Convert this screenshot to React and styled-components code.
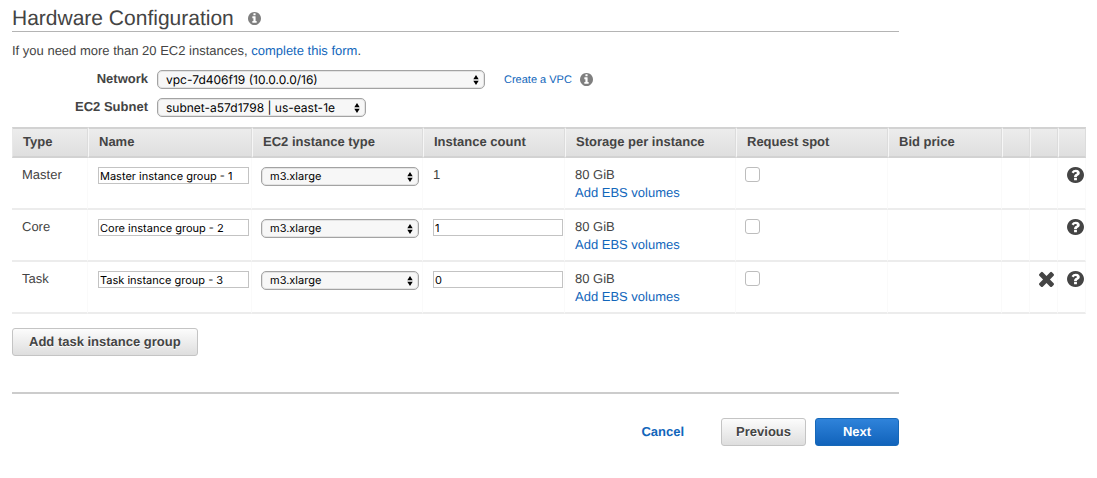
import React from "react";
import styled, { createGlobalStyle, css } from "styled-components";

const GlobalStyle = createGlobalStyle`
  *, *::before, *::after { box-sizing: border-box; }
  body {
    margin: 0;
    background: #fff;
    color: #444;
    font: 13px/18px "Liberation Sans", Arial, sans-serif;
    text-rendering: geometricPrecision;
  }
  button, input, select { text-rendering: inherit; }
`;

const Page = styled.main`
  padding: 6px 11px 0 12px;
`;

const Heading = styled.header`
  display: flex;
  align-items: center;
  gap: 14px;
  max-width: 887px;
  height: 26px;
  border-bottom: 1px solid #b4b4b4;
`;

const Title = styled.h1`
  margin: 0;
  font-size: 21px;
  line-height: 24px;
  font-weight: 400;
`;

const Note = styled.p`
  margin: 10px 0;
`;

const Link = styled.a`
  color: #1166bb;
  text-decoration: none;
  font-size: ${(p) => (p.$small ? "11px" : "inherit")};
  font-weight: ${(p) => (p.$bold ? 700 : 400)};
`;

const IconButton = styled.button`
  display: flex;
  padding: 0;
  border: 0;
  background: none;
  color: ${(p) => (p.$muted ? "#7f7f7f" : "#444")};
  cursor: pointer;
`;

const Fields = styled.div`
  display: grid;
  gap: 9px;
  margin-bottom: 10px;
`;

const Field = styled.div`
  display: flex;
  align-items: center;
  gap: 9px;
  height: 19px;
`;

const Label = styled.label`
  width: 136px;
  padding-bottom: 2px;
  text-align: right;
  font-size: 13px;
  font-weight: 700;
`;

const SelectBox = styled.span`
  display: grid;
  align-items: center;
  width: ${(p) => p.$width};
`;

const Select = styled.select`
  grid-area: 1 / 1;
  appearance: none;
  width: 100%;
  height: 19px;
  padding: 0 20px 0 8px;
  border: 1px solid #a3a3a3;
  border-radius: 5px;
  background: #f7f7f7;
  box-shadow: inset 0 0 0 1px #e3e3e3;
  color: #000;
  font: ${(p) => p.$size}/17px Inter, sans-serif;
`;

const Arrows = styled.svg`
  grid-area: 1 / 1;
  justify-self: end;
  margin-right: 6px;
  pointer-events: none;
`;

const Aside = styled.span`
  display: flex;
  align-items: center;
  gap: 8px;
  margin-left: 10px;
`;

const Table = styled.table`
  width: 100%;
  margin-bottom: 14px;
  border-collapse: separate;
  border-spacing: 0;
  table-layout: fixed;
`;

const Th = styled.th`
  height: 31px;
  padding: 0 0 2px 10px;
  border-top: 2px solid #d2d2d2;
  border-bottom: 2px solid #d2d2d2;
  border-left: 1px solid ${(p) => (p.$first ? "#e8e8e8" : "#f6f6f6")};
  border-right: 1px solid #dcdcdc;
  background: linear-gradient(#ececec, #dfdfdf);
  text-align: left;
  font-size: 13px;
  font-weight: 700;
  white-space: nowrap;
`;

const Td = styled.td`
  height: 52px;
  padding: ${(p) => (p.$control ? "9px 0 0 9px" : "8px 0 0 10px")};
  border-bottom: 2px solid #ececec;
  border-right: 1px solid #fafafa;
  vertical-align: top;
`;

const Input = styled.input`
  display: block;
  width: ${(p) => p.$width};
  height: 17px;
  margin: 0 1px;
  padding: 0 1px;
  border: 1px solid #c3c3c3;
  border-radius: 0;
  background: #fff;
  color: #000;
  font: 11px/15px Inter, sans-serif;
`;

const Check = styled.input`
  appearance: none;
  display: block;
  width: 15px;
  height: 15px;
  margin: 0;
  border: 1px solid #bdbdbd;
  border-radius: 3px;
  background: #fff;
  &:checked { background: #1166bb; }
`;

const variants = {
  plain: css`
    border-color: #c4c4c4;
    background: linear-gradient(#fcfcfc, #dedede);
    color: #444;
    text-shadow: 0 1px 0 #fff;
  `,
  primary: css`
    border-color: #1668b8;
    background: linear-gradient(#2f83da, #1163bb);
    color: #fff;
  `,
};

const Button = styled.button`
  height: 28px;
  min-width: 84px;
  padding: 0 ${(p) => (p.$wide ? "16px" : "14px")};
  border: 1px solid;
  border-radius: 3px;
  font: 700 13px/18px "Liberation Sans", Arial, sans-serif;
  cursor: pointer;
  ${(p) => variants[p.$variant || "plain"]}
`;

const Footer = styled.footer`
  display: flex;
  justify-content: flex-end;
  align-items: center;
  gap: 9px;
  max-width: 887px;
  margin-top: 36px;
  padding-top: 24px;
  border-top: 2px solid #ccc;
`;

const CancelSlot = styled.span`
  margin-right: 28px;
`;

const DISC =
  "M1664 896q0 209-103 385.5t-279.5 279.5-385.5 103-385.5-103-279.5-279.5-103-385.5 103-385.5 279.5-279.5 385.5-103 385.5 103 279.5 279.5 103 385.5z";
const ICONS = {
  info:
    "M1152 1376v-160q0-14-9-23t-23-9h-96v-512q0-14-9-23t-23-9h-320q-14 0-23 9t-9 23v160q0 14 9 23t23 9h96v320h-96q-14 0-23 9t-9 23v160q0 14 9 23t23 9h448q14 0 23-9t9-23zM1024 480v-160q0-14-9-23t-23-9h-192q-14 0-23 9t-9 23v160q0 14 9 23t23 9h192q14 0 23-9t9-23z" +
    DISC,
  help:
    "M1024 1376v-192q0-14-9-23t-23-9h-192q-14 0-23 9t-9 23v192q0 14 9 23t23 9h192q14 0 23-9t9-23zM1280 704q0-88-55.5-163t-138.5-116-170-41q-243 0-371 213-15 24 8 42l132 100q7 6 19 6 16 0 25-12 53-68 86-92 34-24 86-24 48 0 85.5 26t37.5 59q0 38-20 61t-68 45q-63 28-115.5 86.5t-52.5 125.5v36q0 14 9 23t23 9h192q14 0 23-9t9-23q0-19 21.5-49.5t54.5-49.5q32-18 49-28.5t46-35 44.5-48 28-60.5 12.5-81z" +
    DISC,
  remove:
    "M1490 1322q0 40-28 68l-136 136q-28 28-68 28t-68-28l-294-294-294 294q-28 28-68 28t-68-28l-136-136q-28-28-28-68t28-68l294-294-294-294q-28-28-28-68t28-68l136-136q28-28 68-28t68 28l294 294 294-294q28-28 68-28t68 28l136 136q28 28 28 68t-28 68l-294 294 294 294q28 28 28 68z",
};

function Icon({ name, width, height, viewBox = "128 128 1536 1536" }) {
  return (
    <svg width={width} height={height} viewBox={viewBox} preserveAspectRatio="none" aria-hidden="true">
      <path d={ICONS[name]} fill="currentColor" fillRule="evenodd" />
    </svg>
  );
}

function PopUp({ id, width, value, label, size = "11px" }) {
  return (
    <SelectBox $width={width}>
      <Select id={id} aria-label={label} defaultValue={value} $size={size}>
        <option>{value}</option>
      </Select>
      <Arrows width="6" height="10" viewBox="0 0 6 10" aria-hidden="true">
        <path d="M3 0L5.7 4.2H.3zM3 10L.3 5.8H5.7z" fill="#000" />
      </Arrows>
    </SelectBox>
  );
}

const COLUMNS = [
  ["Type", 76],
  ["Name", 164],
  ["EC2 instance type", 171],
  ["Instance count", 142],
  ["Storage per instance", 171],
  ["Request spot", 152],
  ["Bid price", 114],
  ["", 28],
  ["", 28],
  ["", 28],
];

const GROUPS = [
  { type: "Master", name: "Master instance group - 1", count: "1", fixed: true },
  { type: "Core", name: "Core instance group - 2", count: "1" },
  { type: "Task", name: "Task instance group - 3", count: "0", removable: true },
];

function GroupRow({ group }) {
  return (
    <tr>
      <Td>{group.type}</Td>
      <Td $control>
        <Input $width="151px" aria-label={`${group.type} name`} defaultValue={group.name} />
      </Td>
      <Td $control>
        <PopUp width="158px" value="m3.xlarge" label={`${group.type} instance type`} />
      </Td>
      {group.fixed ? (
        <Td>{group.count}</Td>
      ) : (
        <Td $control>
          <Input $width="130px" aria-label={`${group.type} instance count`} defaultValue={group.count} />
        </Td>
      )}
      <Td>
        80 GiB
        <br />
        <Link href="#ebs">Add EBS volumes</Link>
      </Td>
      <Td $control>
        <Check type="checkbox" aria-label={`Request spot for ${group.type}`} />
      </Td>
      <Td />
      <Td />
      <Td $control>
        {group.removable && (
          <IconButton aria-label="Remove group">
            <Icon name="remove" width="15" height="16" viewBox="302 302 1188 1252" />
          </IconButton>
        )}
      </Td>
      <Td $control>
        <IconButton aria-label={`Help for ${group.type}`}>
          <Icon name="help" width="17" height="16" />
        </IconButton>
      </Td>
    </tr>
  );
}

export default function App() {
  return (
    <Page>
      <GlobalStyle />
      <Heading>
        <Title>Hardware Configuration</Title>
        <IconButton $muted aria-label="About hardware configuration">
          <Icon name="info" width="13" height="13" />
        </IconButton>
      </Heading>
      <Note>
        If you need more than 20 EC2 instances, <Link href="#form">complete this form</Link>.
      </Note>
      <Fields>
        <Field>
          <Label htmlFor="network">Network</Label>
          <PopUp id="network" width="328px" size="12px" value="vpc-7d406f19 (10.0.0.0/16)" />
          <Aside>
            <Link $small href="#vpc">Create a VPC</Link>
            <IconButton $muted aria-label="About networks">
              <Icon name="info" width="13" height="13" />
            </IconButton>
          </Aside>
        </Field>
        <Field>
          <Label htmlFor="subnet">EC2 Subnet</Label>
          <PopUp id="subnet" width="209px" size="12px" value="subnet-a57d1798 | us-east-1e" />
        </Field>
      </Fields>
      <Table>
        <colgroup>
          {COLUMNS.map(([, width], i) => (
            <col key={i} width={width} />
          ))}
        </colgroup>
        <thead>
          <tr>
            {COLUMNS.map(([title], i) => (
              <Th key={i} $first={i === 0}>{title}</Th>
            ))}
          </tr>
        </thead>
        <tbody>
          {GROUPS.map((group) => (
            <GroupRow key={group.type} group={group} />
          ))}
        </tbody>
      </Table>
      <Button $wide>Add task instance group</Button>
      <Footer>
        <CancelSlot>
          <Link $bold href="#cancel">Cancel</Link>
        </CancelSlot>
        <Button>Previous</Button>
        <Button $variant="primary">Next</Button>
      </Footer>
    </Page>
  );
}
